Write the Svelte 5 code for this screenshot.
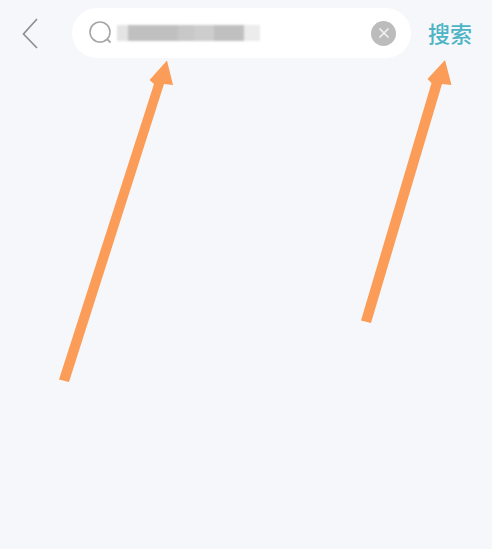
<script>
  const blurBlocks = [
    { w: 11, c: '#e4e4e4' },
    { w: 50, c: '#c0c0c0' },
    { w: 16, c: '#c8c8c8' },
    { w: 20, c: '#cdcdcd' },
    { w: 30, c: '#c0c0c0' },
    { w: 16, c: '#ececec' }
  ];
</script>

<div class="page">
  <header class="bar">
    <button class="back" aria-label="返回">
      <svg width="18" height="32" viewBox="0 0 18 32">
        <path d="M16 2 L2.5 17 L16 31" fill="none" stroke="#8d8f92" stroke-width="1.7" />
      </svg>
    </button>
    <div class="search">
      <svg class="lens" width="24" height="26" viewBox="0 0 24 26">
        <circle cx="11" cy="12" r="10" fill="none" stroke="#a4a6a8" stroke-width="1.6" />
        <path d="M18.5 19.5 L21.5 22.5" stroke="#a4a6a8" stroke-width="1.8" fill="none" />
      </svg>
      <div class="blur">
        {#each blurBlocks as b}
          <span style="width:{b.w}px;background:{b.c}"></span>
        {/each}
      </div>
      <span class="clear">
        <svg width="12" height="12" viewBox="0 0 12 12">
          <path d="M1.5 1.5 L10.5 10.5 M10.5 1.5 L1.5 10.5" stroke="#f1f1f1" stroke-width="1.7" fill="none" />
        </svg>
      </span>
    </div>
    <span class="go">搜索</span>
  </header>

  <svg class="arrows" width="492" height="549" viewBox="0 0 492 549">
    <g fill="#fb9d58">
      <path d="M59 379.5 L154 84 L149.5 80 L167 60.5 L173 85 L164 84 L69 382 Z" />
      <path d="M361 320.5 L431.5 83 L427.5 79 L445 60 L451.5 85 L442 84 L371 323 Z" />
    </g>
  </svg>
</div>

<style>
  :global(body) {
    margin: 0;
    background: #f6f7fb;
  }
  .page {
    position: relative;
    width: 492px;
    height: 549px;
    overflow: hidden;
    background: #f6f7fb;
  }
  .bar {
    display: flex;
    align-items: center;
    height: 50px;
    padding: 8px 0 0 21px;
  }
  .back {
    display: flex;
    width: 51px;
    padding: 0;
    border: 0;
    background: none;
  }
  .search {
    display: flex;
    align-items: center;
    width: 339px;
    height: 50px;
    box-sizing: border-box;
    padding: 0 15px 0 17px;
    border-radius: 25px;
    background: #fff;
  }
  .lens {
    flex: none;
  }
  .blur {
    display: flex;
    height: 16px;
    margin-left: 4px;
    filter: blur(1.2px);
  }
  .clear {
    display: flex;
    align-items: center;
    justify-content: center;
    width: 25px;
    height: 25px;
    margin-left: auto;
    border-radius: 50%;
    background: #bcbcbc;
  }
  .go {
    margin: -2px 0 0 17px;
    font-family: "Noto Sans CJK SC", sans-serif;
    font-size: 22px;
    font-weight: 500;
    line-height: 30px;
    color: #4db4c6;
    white-space: nowrap;
  }
  .arrows {
    position: absolute;
    top: 0;
    left: 0;
    filter: blur(0.5px);
  }
</style>
